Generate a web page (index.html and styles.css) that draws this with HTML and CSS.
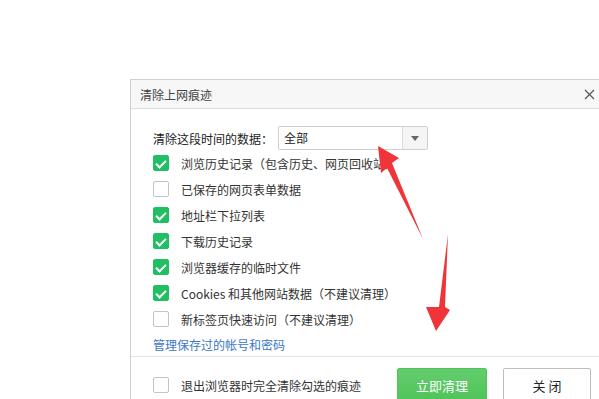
FILE: index.html
```html
<!DOCTYPE html>
<html lang="zh-CN">
<head>
  <meta charset="UTF-8">
  <meta name="viewport" content="width=device-width, initial-scale=1.0">
  <title>清除上网痕迹</title>
  <link rel="stylesheet" href="styles.css">
</head>
<body>
  <div class="dialog">
    <div class="dialog-head">
      <span class="dialog-title">清除上网痕迹</span>
      <span class="dialog-close">
        <svg width="11" height="11" viewBox="0 0 11 11"><path d="M1 1L10 10M10 1L1 10" stroke="#555" stroke-width="1.2" fill="none"/></svg>
      </span>
    </div>
    <div class="dialog-body">
      <div class="range">
        <label class="range-label">清除这段时间的数据：</label>
        <div class="select">
          <span class="select-value">全部</span>
          <span class="select-btn"><i class="caret"></i></span>
        </div>
      </div>
      <ul class="opts">
        <li><span class="chk on"></span>浏览历史记录（包含历史、网页回收站）</li>
        <li><span class="chk"></span>已保存的网页表单数据</li>
        <li><span class="chk on"></span>地址栏下拉列表</li>
        <li><span class="chk on"></span>下载历史记录</li>
        <li><span class="chk on"></span>浏览器缓存的临时文件</li>
        <li><span class="chk on"></span>Cookies 和其他网站数据（不建议清理）</li>
        <li><span class="chk"></span>新标签页快速访问（不建议清理）</li>
      </ul>
      <a class="manage" href="#">管理保存过的帐号和密码</a>
    </div>
    <div class="dialog-foot">
      <div class="exit-opt"><span class="chk"></span>退出浏览器时完全清除勾选的痕迹</div>
      <button class="btn btn-ok">立即清理</button>
      <button class="btn btn-close">关 闭</button>
    </div>
  </div><!--//dialog-->

  <svg class="marks" width="599" height="399" viewBox="0 0 599 399">
    <polygon points="378,146 399,158 392,163 423,239 387,168 381,173" fill="#f0353a"/>
    <polygon points="448,234 445,307 450,310 436,331 426,307 439,307" fill="#f0353a"/>
  </svg>
</body>
</html>
```

FILE: styles.css
```css
* {margin:0; padding:0; box-sizing:border-box;}
html, body {width:599px; height:399px; overflow:hidden;}
body {position:relative; background:#fff; font-family:"Noto Sans CJK SC", "Microsoft YaHei", sans-serif; font-size:12px; color:#333;}

.dialog {width:480px; margin:79px 0 0 130px; border:1px solid #cfcfcf; background:#fff;}

.dialog-head {display:flex; align-items:center; height:29px; padding:0 13px 0 9px; background:#f7f7f7; border-bottom:1px solid #dcdcdc;}
.dialog-title {flex:1; color:#444;}
.dialog-close {display:flex; margin-right:1px;}

.dialog-body {padding:17px 0 0 22px;}
.range {display:flex; align-items:center; height:24px;}
.range-label {width:125px; color:#222;}
.select {display:flex; width:150px; height:24px; border:1px solid #cfcfcf; border-radius:2px;}
.select-value {flex:1; padding-left:5px; line-height:22px; color:#222;}
.select-btn {display:flex; align-items:center; justify-content:center; width:25px; background:#f5f5f5; border-left:1px solid #dcdcdc;}
.caret {border-left:4px solid transparent; border-right:4px solid transparent; border-top:5px solid #666;}

.opts {list-style:none;}
.opts li {display:flex; align-items:center; height:26px;}
.chk {display:inline-block; flex:none; width:16px; height:16px; margin-right:12px; border:1px solid #c4c4c4; border-radius:2px; background:#fff; position:relative;}
.chk.on {background:#21bf63; border-color:#21bf63;}
.chk.on:after {content:''; position:absolute; left:4px; top:2px; width:4px; height:8px; border-right:2px solid #fff; border-bottom:2px solid #fff; transform:rotate(45deg);}

.manage {display:flex; align-items:center; height:24px; color:#3b78c8; text-decoration:none;}

.dialog-foot {display:flex; align-items:flex-start; padding:11px 18px 0 22px; border-top:1px solid #e6e6e6; height:50px;}
.exit-opt {display:flex; align-items:center; height:34px; flex:1;}
.btn {height:34px; border-radius:2px; font-family:inherit; font-size:13px; cursor:pointer;}
.btn-ok {width:90px; margin-right:16px; color:#fff; background:linear-gradient(#63cd6d, #4fc35a); border:1px solid #52c25c;}
.btn-close {width:88px; color:#222; background:#fff; border:1px solid #bdbdbd;}

.marks {position:absolute; left:0; top:0; pointer-events:none;}
```
